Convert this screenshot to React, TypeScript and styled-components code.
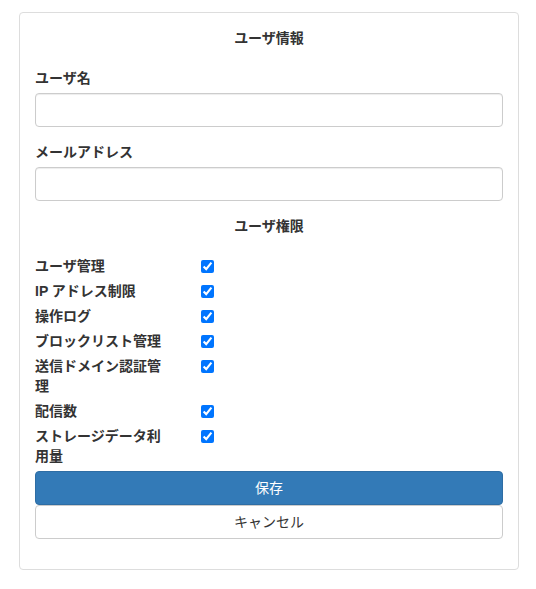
import React from "react";
import styled, { createGlobalStyle } from "styled-components";

const GlobalStyle = createGlobalStyle`
  body {
    margin: 0;
    background: #fff;
    color: #333;
    font-family: "Liberation Sans", "Noto Sans CJK JP", sans-serif;
    font-size: 14px;
    line-height: 20px;
  }
  * {
    box-sizing: border-box;
  }
`;

const Page = styled.div`
  padding: 12px 17px 19px 19px;
`;

const Card = styled.div`
  width: 500px;
  background: #fff;
  border: 1px solid #ddd;
  border-radius: 4px;
  padding: 15px 15px 30px;
`;

const SectionTitle = styled.h4`
  margin: 0 0 20px;
  font-size: 14px;
  line-height: 20px;
  font-weight: bold;
  text-align: center;
`;

const FormGroup = styled.div`
  margin-bottom: 15px;
`;

const Label = styled.label`
  display: block;
  margin-bottom: 5px;
  font-weight: bold;
`;

const Input = styled.input`
  display: block;
  width: 100%;
  height: 34px;
  padding: 6px 12px;
  font-size: 14px;
  color: #555;
  background: #fff;
  border: 1px solid #ccc;
  border-radius: 4px;
  box-shadow: inset 0 1px 1px rgba(0, 0, 0, 0.075);
`;

const PermissionList = styled.div`
  display: flex;
  flex-direction: column;
`;

const PermissionRow = styled.div`
  display: grid;
  grid-template-columns: 166px auto;
  align-items: start;
  margin-bottom: 5px;
`;

const PermissionName = styled.span`
  max-width: 130px;
  font-weight: bold;
`;

const Check = styled.input`
  width: 13px;
  height: 13px;
  margin: 4px 0 0;
`;

const Button = styled.button<{ $primary?: boolean }>`
  display: block;
  width: 100%;
  height: 34px;
  padding: 6px 12px;
  font-family: inherit;
  font-size: 14px;
  line-height: 20px;
  border-radius: 4px;
  cursor: pointer;
  color: ${(p) => (p.$primary ? "#fff" : "#333")};
  background: ${(p) => (p.$primary ? "#337ab7" : "#fff")};
  border: 1px solid ${(p) => (p.$primary ? "#2e6da4" : "#ccc")};
`;

const permissions = [
  "ユーザ管理",
  "IP アドレス制限",
  "操作ログ",
  "ブロックリスト管理",
  "送信ドメイン認証管理",
  "配信数",
  "ストレージデータ利用量",
];

export default function App() {
  return (
    <Page>
      <GlobalStyle />
      <Card>
        <SectionTitle>ユーザ情報</SectionTitle>
        <FormGroup>
          <Label>ユーザ名</Label>
          <Input type="text" />
        </FormGroup>
        <FormGroup>
          <Label>メールアドレス</Label>
          <Input type="email" />
        </FormGroup>
        <SectionTitle>ユーザ権限</SectionTitle>
        <PermissionList>
          {permissions.map((name) => (
            <PermissionRow key={name}>
              <PermissionName>{name}</PermissionName>
              <Check type="checkbox" defaultChecked />
            </PermissionRow>
          ))}
        </PermissionList>
        <Button $primary>保存</Button>
        <Button>キャンセル</Button>
      </Card>
    </Page>
  );
}
